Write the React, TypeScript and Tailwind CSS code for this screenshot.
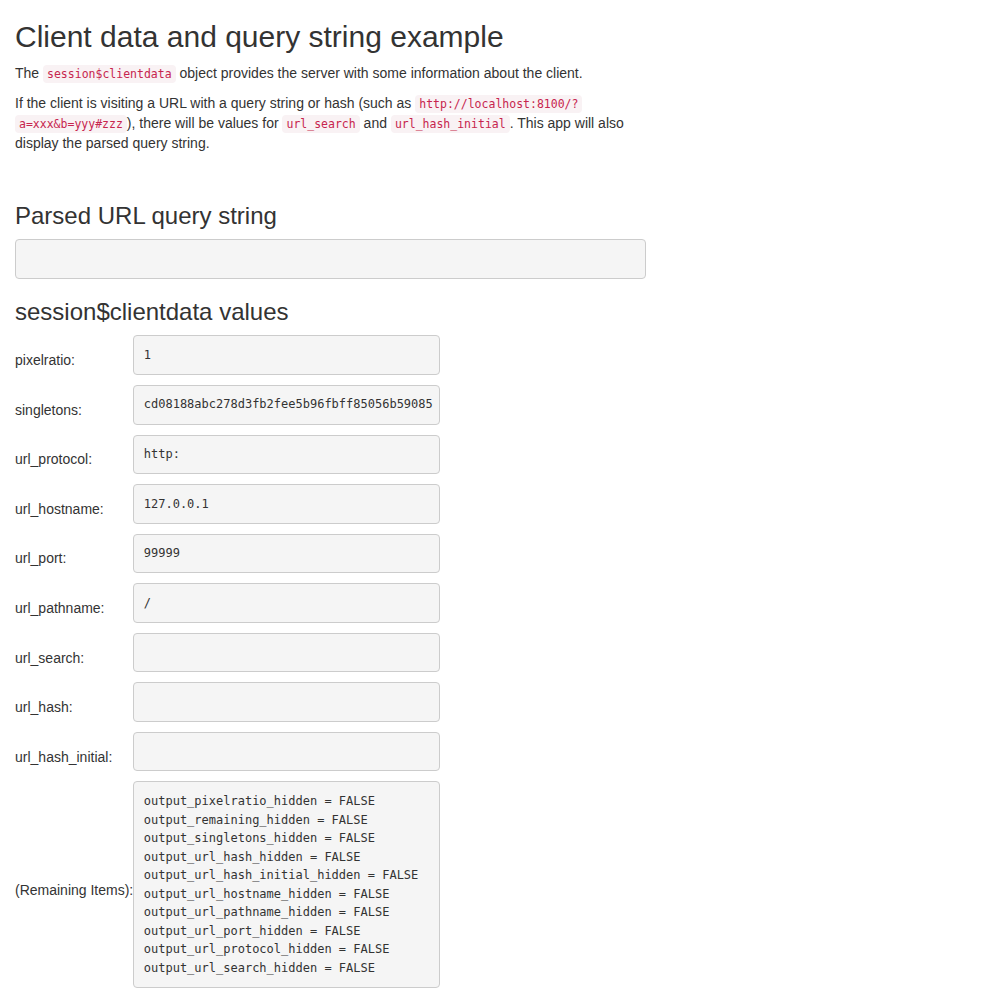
import React from 'react'

const sans = "font-['Liberation_Sans',Arial,sans-serif]"
const mono = "font-['DejaVu_Sans_Mono',monospace]"

function Code({ children }: { children: React.ReactNode }) {
  return (
    <code className={`${mono} text-[11.5px] leading-none text-[#c7254e] bg-[#f9f2f4] rounded px-1 py-[2px]`}>
      {children}
    </code>
  )
}

function Pre({ children, className = '' }: { children?: React.ReactNode; className?: string }) {
  return (
    <pre
      className={`${mono} text-[12px] leading-[18.57px] text-[#333] bg-[#f5f5f5] border border-[#ccc] rounded p-[9.5px] min-h-[39.57px] whitespace-pre ${className}`}
    >
      {children}
    </pre>
  )
}

const rows: [string, string][] = [
  ['pixelratio:', '1'],
  ['singletons:', 'cd08188abc278d3fb2fee5b96fbff85056b59085'],
  ['url_protocol:', 'http:'],
  ['url_hostname:', '127.0.0.1'],
  ['url_port:', '99999'],
  ['url_pathname:', '/'],
  ['url_search:', ''],
  ['url_hash:', ''],
  ['url_hash_initial:', ''],
]

const remaining = [
  'output_pixelratio_hidden = FALSE',
  'output_remaining_hidden = FALSE',
  'output_singletons_hidden = FALSE',
  'output_url_hash_hidden = FALSE',
  'output_url_hash_initial_hidden = FALSE',
  'output_url_hostname_hidden = FALSE',
  'output_url_pathname_hidden = FALSE',
  'output_url_port_hidden = FALSE',
  'output_url_protocol_hidden = FALSE',
  'output_url_search_hidden = FALSE',
]

export default function App() {
  return (
    <div className={`${sans} text-[14px] leading-[20px] text-[#333] bg-white min-h-[998px] px-[15px]`}>
      <h2 className="text-[30px] leading-[33px] mt-5 mb-[10px]">Client data and query string example</h2>
      <p className="mb-[10px]">
        The <Code>session$clientdata</Code> object provides the server with some information about the client.
      </p>
      <p className="mb-[10px] w-[660px]">
        If the client is visiting a URL with a query string or hash (such as <Code>http://localhost:8100/?</Code>
        <br />
        <Code>a=xxx&amp;b=yyy#zzz</Code>), there will be values for <Code>url_search</Code> and{' '}
        <Code>url_hash_initial</Code>. This app will also
        <br />
        display the parsed query string.
      </p>

      <h3 className="text-[24px] leading-[26.4px] mt-[50px] mb-[10px]">Parsed URL query string</h3>
      <Pre className="w-[631px]" />

      <h3 className="text-[24px] leading-[26.4px] mt-[20px] mb-[10px]">session$clientdata values</h3>
      <table className="border-collapse">
        <tbody>
          {rows.map(([label, value]) => (
            <tr key={label}>
              <td className="align-middle p-0 w-[118px]">{label}</td>
              <td className="align-middle p-0">
                <Pre className="w-[307px] mb-[10px]">{value}</Pre>
              </td>
            </tr>
          ))}
          <tr>
            <td className="align-middle p-0 whitespace-nowrap">(Remaining Items):</td>
            <td className="align-middle p-0">
              <Pre className="w-[307px] mb-[10px]">{remaining.join('\n')}</Pre>
            </td>
          </tr>
        </tbody>
      </table>
    </div>
  )
}
